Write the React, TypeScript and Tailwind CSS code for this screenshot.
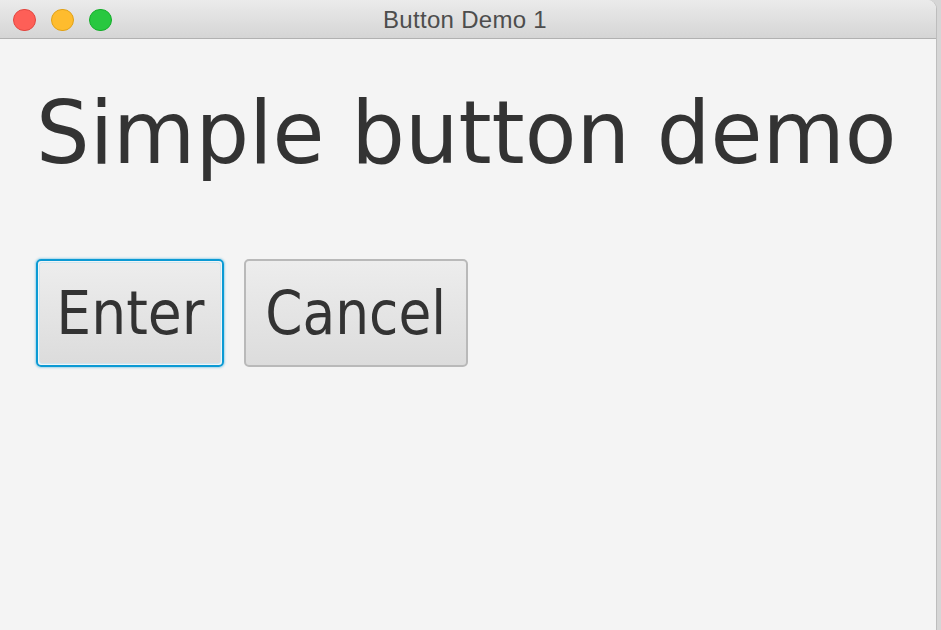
import React from "react";

export default function App() {
  return (
    <div className="w-[941px] h-[630px] bg-[#d6d6d6] flex overflow-hidden">
      <div className="w-[937px] h-[630px] flex flex-col rounded-tr-[9px] overflow-hidden border-r border-[#bdbdbd] bg-[#f4f4f4]">
        <div className="h-[39px] shrink-0 relative flex items-center justify-center bg-gradient-to-b from-[#ebebeb] to-[#d5d5d5] border-b border-[#b1b1b1]">
          <div className="absolute left-[13px] top-[9px] flex gap-[15px]">
            <div className="w-[23px] h-[22px] rounded-full bg-[#fe5f57] border border-[#e2463f]" />
            <div className="w-[23px] h-[22px] rounded-full bg-[#febc2e] border border-[#e1a116]" />
            <div className="w-[23px] h-[22px] rounded-full bg-[#28c840] border border-[#14ae2a]" />
          </div>
          <span className="text-[24px] leading-none text-[#4d4d4d] tracking-[0.3px] pt-[1px] pr-[6px]" style={{ fontFamily: '"Liberation Sans", Arial, sans-serif' }}>
            Button Demo 1
          </span>
        </div>
        <div className="flex flex-col pl-[36px]" style={{ fontFamily: '"DejaVu Sans", Verdana, sans-serif' }}>
          <div className="mt-[50px] text-[88px] leading-[88px] text-[#333333] whitespace-nowrap scale-x-[0.96] origin-left">Simple button demo</div>
          <div className="mt-[82px] flex gap-[20px]">
            <div className="w-[188px] h-[108px] rounded-[5px] border-2 border-[#0b9ad4] shadow-[0_0_2px_1px_rgba(11,154,212,0.35)] p-[1px]">
              <div className="w-full h-full rounded-[3px] border border-[#cde6f1] bg-gradient-to-b from-[#ededed] to-[#dcdcdc] flex items-center justify-center text-[#333333]">
                <span className="text-[60px] leading-none scale-x-[0.92] pl-[2px]">Enter</span>
              </div>
            </div>
            <div className="w-[224px] h-[108px] rounded-[5px] border-2 border-[#b9b9b9] bg-gradient-to-b from-[#ededed] to-[#dcdcdc] flex items-center justify-center text-[#333333]">
              <span className="text-[60px] leading-none scale-x-[0.89]">Cancel</span>
            </div>
          </div>
        </div>
      </div>
    </div>
  );
}
